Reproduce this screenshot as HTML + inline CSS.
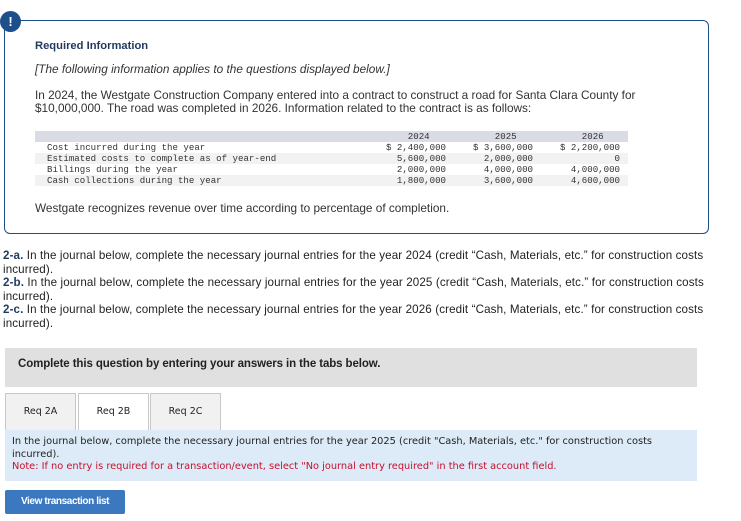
<!DOCTYPE html>
<html><head><style>
body{margin:0;width:741px;height:521px;background:#fff;font-family:"Liberation Sans",sans-serif;color:#222;position:relative;overflow:hidden}
.a{position:absolute;white-space:nowrap}
.box{position:absolute;left:4px;top:20px;width:703px;height:212px;border:1px solid #1d4f8a;border-radius:0 6px 6px 6px}
.ic{position:absolute;left:0;top:11px;width:21px;height:21px;border-radius:50%;background:#1d4f8a;color:#fff;font-weight:bold;font-size:13px;text-align:center;line-height:21px}
.mono{font-family:"Liberation Mono","DejaVu Sans Mono",monospace;font-size:9.1px;color:#333}
.row{position:absolute;left:35px;width:593px;height:11px}
.r{position:absolute;text-align:right;line-height:11px}
.q{font-size:11.6px;letter-spacing:0.12px;line-height:13.5px;color:#222}
.tab{position:absolute;top:393px;height:36px;border:1px solid #c8c8c8;border-bottom:none;background:#f1f1f1;font-family:"DejaVu Sans",sans-serif;font-size:9.5px;text-align:center;line-height:36px;color:#222}
</style></head><body>
<div class="box"></div>
<div class="ic">!</div>
<div class="a" style="left:35px;top:40px;font-size:11.2px;font-weight:bold;color:#1f3a5f">Required Information</div>
<div class="a" style="left:35px;top:62px;font-size:11.8px;font-style:italic;color:#333">[The following information applies to the questions displayed below.]</div>
<div class="a" style="left:35px;top:89px;font-size:11.8px;line-height:13px;color:#333">In 2024, the Westgate Construction Company entered into a contract to construct a road for Santa Clara County for<br>$10,000,000. The road was completed in 2026. Information related to the contract is as follows:</div>
<div class="row" style="top:131px;background:#d9dce5"></div>
<div class="row" style="top:153px;background:#f2f2f2"></div>
<div class="row" style="top:175px;background:#f2f2f2"></div>
<div class="a mono" style="left:47px;top:142px;line-height:11px">Cost incurred during the year<br>Estimated costs to complete as of year-end<br>Billings during the year<br>Cash collections during the year</div>
<div class="r mono" style="left:366px;width:80px;top:131px">&nbsp;&nbsp;2024&nbsp;&nbsp;&nbsp;<br>$ 2,400,000<br>5,600,000<br>2,000,000<br>1,800,000</div>
<div class="r mono" style="left:453px;width:80px;top:131px">&nbsp;&nbsp;2025&nbsp;&nbsp;&nbsp;<br>$ 3,600,000<br>2,000,000<br>4,000,000<br>3,600,000</div>
<div class="r mono" style="left:540px;width:80px;top:131px">2026&nbsp;&nbsp;&nbsp;<br>$ 2,200,000<br>0<br>4,000,000<br>4,600,000</div>
<div class="a" style="left:35px;top:201px;font-size:11.8px;color:#333">Westgate recognizes revenue over time according to percentage of completion.</div>
<div class="a q" style="left:3px;top:249px"><b style="color:#1f3a5f">2-a.</b> In the journal below, complete the necessary journal entries for the year 2024 (credit “Cash, Materials, etc.” for construction costs<br>incurred).<br><b style="color:#1f3a5f">2-b.</b> In the journal below, complete the necessary journal entries for the year 2025 (credit “Cash, Materials, etc.” for construction costs<br>incurred).<br><b style="color:#1f3a5f">2-c.</b> In the journal below, complete the necessary journal entries for the year 2026 (credit “Cash, Materials, etc.” for construction costs<br>incurred).</div>
<div class="a" style="left:5px;top:348px;width:692px;height:39px;background:#e0e0e0"></div>
<div class="a" style="left:18px;top:358px;font-size:11.5px;font-weight:bold;letter-spacing:-0.1px">Complete this question by entering your answers in the tabs below.</div>
<div class="tab" style="left:5px;width:69px">Req 2A</div>
<div class="tab" style="left:78px;width:69px;background:#fff;height:37px">Req 2B</div>
<div class="tab" style="left:150px;width:69px">Req 2C</div>
<div class="a" style="left:5px;top:430px;width:692px;height:51px;background:#dcebf7"></div>
<div class="a" style="left:12px;top:436px;font-family:'DejaVu Sans',sans-serif;font-size:9.8px;line-height:12.5px;color:#222">In the journal below, complete the necessary journal entries for the year 2025 (credit "Cash, Materials, etc." for construction costs<br>incurred).<br><span style="color:#c8102e">Note: If no entry is required for a transaction/event, select "No journal entry required" in the first account field.</span></div>
<div class="a" style="left:5px;top:490px;width:120px;height:24px;background:#3b78c0;border-radius:2px;color:#fff;font-size:10px;font-weight:bold;text-align:center;line-height:24px;letter-spacing:-0.4px">View transaction list</div>
</body></html>
